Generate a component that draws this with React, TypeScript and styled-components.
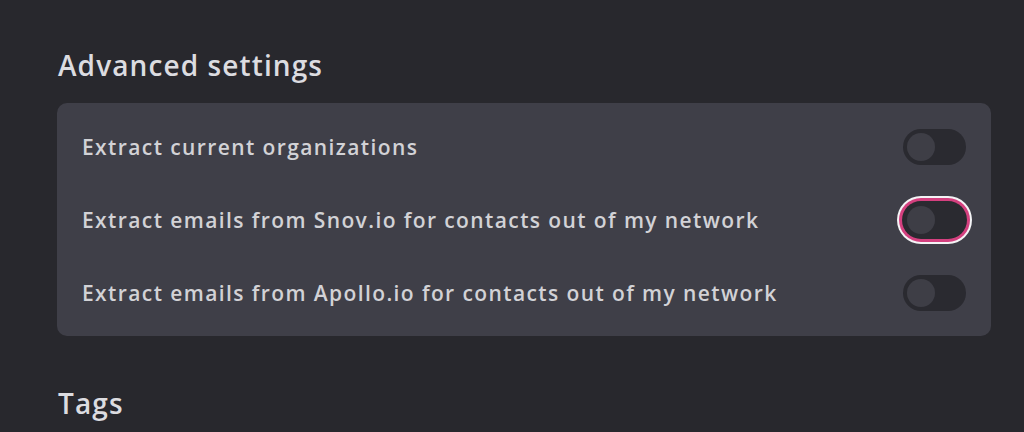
import React, { useState } from 'react';
import styled, { createGlobalStyle } from 'styled-components';

const GlobalStyle = createGlobalStyle`
  html, body {
    margin: 0;
    padding: 0;
    background: #28282d;
  }
  body {
    font-family: 'Open Sans', 'Noto Sans', sans-serif;
    -webkit-font-smoothing: antialiased;
  }
`;

// Define the data structure for a setting row
interface Setting {
    id: number;
    label: string;
}

const settings: Setting[] = [
    { id: 1, label: 'Extract current organizations' },
    { id: 2, label: 'Extract emails from Snov.io for contacts out of my network' },
    { id: 3, label: 'Extract emails from Apollo.io for contacts out of my network' },
];

const Page = styled.div`
  min-height: 432px;
  box-sizing: border-box;
  padding: 44px 33px 0 57px;
  background: #28282d;
`;

const SectionTitle = styled.h2<{ spaced?: boolean }>`
  margin: 0 0 0 1px;
  margin-top: ${(props) => (props.spaced ? '46px' : '0')};
  font-size: 28px;
  line-height: 42px;
  font-weight: 600;
  letter-spacing: 1.1px;
  color: #dcdce0;
`;

const Card = styled.div`
  margin-top: 17px;
  padding: 7px 25px;
  border-radius: 10px;
  background: #3f3f48;
`;

const Row = styled.div`
  height: 73px;
  display: flex;
  align-items: center;
  justify-content: space-between;
`;

const Label = styled.span`
  font-size: 21px;
  font-weight: 600;
  letter-spacing: 1.4px;
  color: #d2d2d6;
`;

const Toggle = styled.button<{ isOn: boolean; isFocused: boolean }>`
  position: relative;
  width: 63px;
  height: 36px;
  padding: 0;
  border: none;
  border-radius: 18px;
  background: ${(props) => (props.isOn ? '#d4407f' : '#2a2a30')};
  cursor: pointer;
  outline: none;
  box-shadow: ${(props) =>
        props.isFocused ? '0 0 0 1px #2a2a30, 0 0 0 4px #d4407f, 0 0 0 6px #f4f4f6' : 'none'};
  transition: background 0.2s ease-in;
`;

const Knob = styled.span<{ isOn: boolean }>`
  position: absolute;
  top: 4px;
  left: ${(props) => (props.isOn ? '31px' : '4px')};
  width: 28px;
  height: 28px;
  border-radius: 50%;
  background: #3e3e46;
  transition: left 0.2s ease-in;
`;

const App: React.FC = () => {
    const [enabled, setEnabled] = useState<Record<number, boolean>>({});
    const focusedId = 2;

    return (
        <>
            <GlobalStyle />
            <Page>
                <SectionTitle>Advanced settings</SectionTitle>
                <Card>
                    {settings.map((setting) => (
                        <Row key={setting.id}>
                            <Label>{setting.label}</Label>
                            <Toggle
                                isOn={enabled[setting.id] || false}
                                isFocused={setting.id === focusedId}
                                onClick={() => setEnabled({ ...enabled, [setting.id]: !enabled[setting.id] })}
                            >
                                <Knob isOn={enabled[setting.id] || false} />
                            </Toggle>
                        </Row>
                    ))}
                </Card>
                <SectionTitle spaced>Tags</SectionTitle>
            </Page>
        </>
    );
};

export default App;
